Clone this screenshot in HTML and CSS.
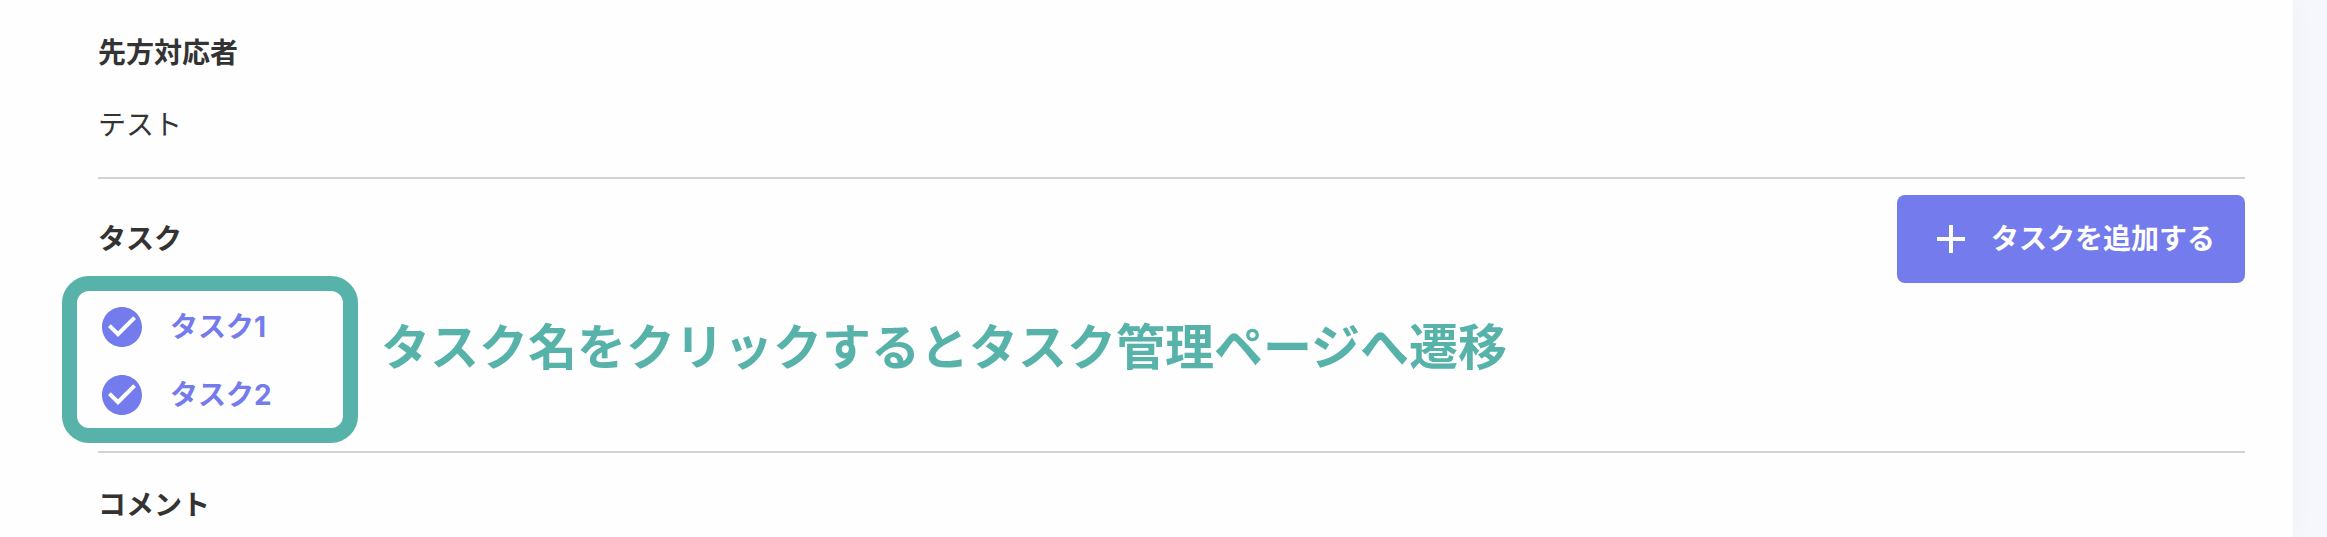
FILE: index.html
```html
<!DOCTYPE html>
<html lang="ja">
    <head>
        <meta charset="utf-8">
        <title>タスク</title>
        <link rel="stylesheet" href="styles.css">
    </head>
    <body>
        <main class="panel">
            <!-- 先方対応者 -->
            <section class="section section-person">
                <h2 class="section-title">先方対応者</h2>
                <p class="section-text">テスト</p>
            </section>
            <!-- タスク -->
            <section class="section section-task">
                <div class="task-header">
                    <h2 class="section-title">タスク</h2>
                    <button type="button" class="button-add">
                        <svg class="icon" viewBox="0 0 24 24" aria-hidden="true"><path d="M19 13h-6v6h-2v-6H5v-2h6V5h2v6h6v2z"/></svg>
                        <span>タスクを追加する</span>
                    </button>
                </div>
                <div class="task-body">
                    <ul class="task-list">
                        <li>
                            <a href="#task1" class="task-link">
                                <svg class="icon" viewBox="0 0 24 24" aria-hidden="true"><path d="M12 2C6.48 2 2 6.48 2 12s4.48 10 10 10 10-4.48 10-10S17.52 2 12 2zm-2 15l-5-5 1.41-1.41L10 14.17l7.59-7.59L19 8l-9 9z"/></svg>
                                <span>タスク1</span>
                            </a>
                        </li>
                        <li>
                            <a href="#task2" class="task-link">
                                <svg class="icon" viewBox="0 0 24 24" aria-hidden="true"><path d="M12 2C6.48 2 2 6.48 2 12s4.48 10 10 10 10-4.48 10-10S17.52 2 12 2zm-2 15l-5-5 1.41-1.41L10 14.17l7.59-7.59L19 8l-9 9z"/></svg>
                                <span>タスク2</span>
                            </a>
                        </li>
                    </ul>
                    <p class="task-note">タスク名をクリックするとタスク管理ページへ遷移</p>
                </div>
            </section>
            <!-- コメント -->
            <section class="section section-comment">
                <h2 class="section-title">コメント</h2>
            </section>
        </main>
    </body>
</html>
```

FILE: styles.css
```css
* {
    box-sizing: border-box;
}
body {
    margin: 0;
    background-color: #f6f7fc;
    color: #333;
    font-family: Inter, "Noto Sans CJK JP", sans-serif;
    font-size: 28px;
    line-height: 40px;
}
h2, p, ul {
    margin: 0;
    padding: 0;
}
.panel {
    min-height: 100vh;
    margin-right: 34px;
    padding: 0 48px 0 98px;
    background-color: #fefefe;
    box-shadow: 0 0 24px rgba(0, 0, 0, 0.03);
}
.section {
    border-bottom: 2px solid #d3d3d3;
}
.section-title {
    font-size: 28px;
    font-weight: bold;
}
.section-person {
    padding: 33px 0 32px;
}
.section-text {
    margin-top: 32px;
}
.section-task {
    padding: 16px 0 8px;
}
.section-comment {
    padding-top: 32px;
    border-bottom: none;
}
.icon {
    flex: none;
    width: 48px;
    height: 48px;
    fill: currentColor;
}
.task-header {
    display: flex;
    align-items: center;
    justify-content: space-between;
}
.button-add {
    display: flex;
    align-items: center;
    gap: 16px;
    padding: 20px 30px;
    border: none;
    border-radius: 8px;
    background-color: #747bed;
    color: #fff;
    font: inherit;
    font-weight: bold;
    cursor: pointer;
}
/* 枠線はタスク一覧より外側に広げる */
.task-body {
    display: flex;
    align-items: flex-start;
    gap: 23px;
    margin: -7px 0 0 -36px;
}
.task-list {
    display: grid;
    gap: 20px;
    width: 296px;
    padding: 12px 20px 9px 21px;
    border: 15px solid #57b3a9;
    border-radius: 27px;
    list-style: none;
}
.task-link {
    display: flex;
    align-items: center;
    gap: 24px;
    color: #747bed;
    font-weight: bold;
    text-decoration: none;
}
.task-note {
    padding-top: 40px;
    color: #57b3a9;
    font-size: 49px;
    font-weight: bold;
    line-height: 64px;
}
```
